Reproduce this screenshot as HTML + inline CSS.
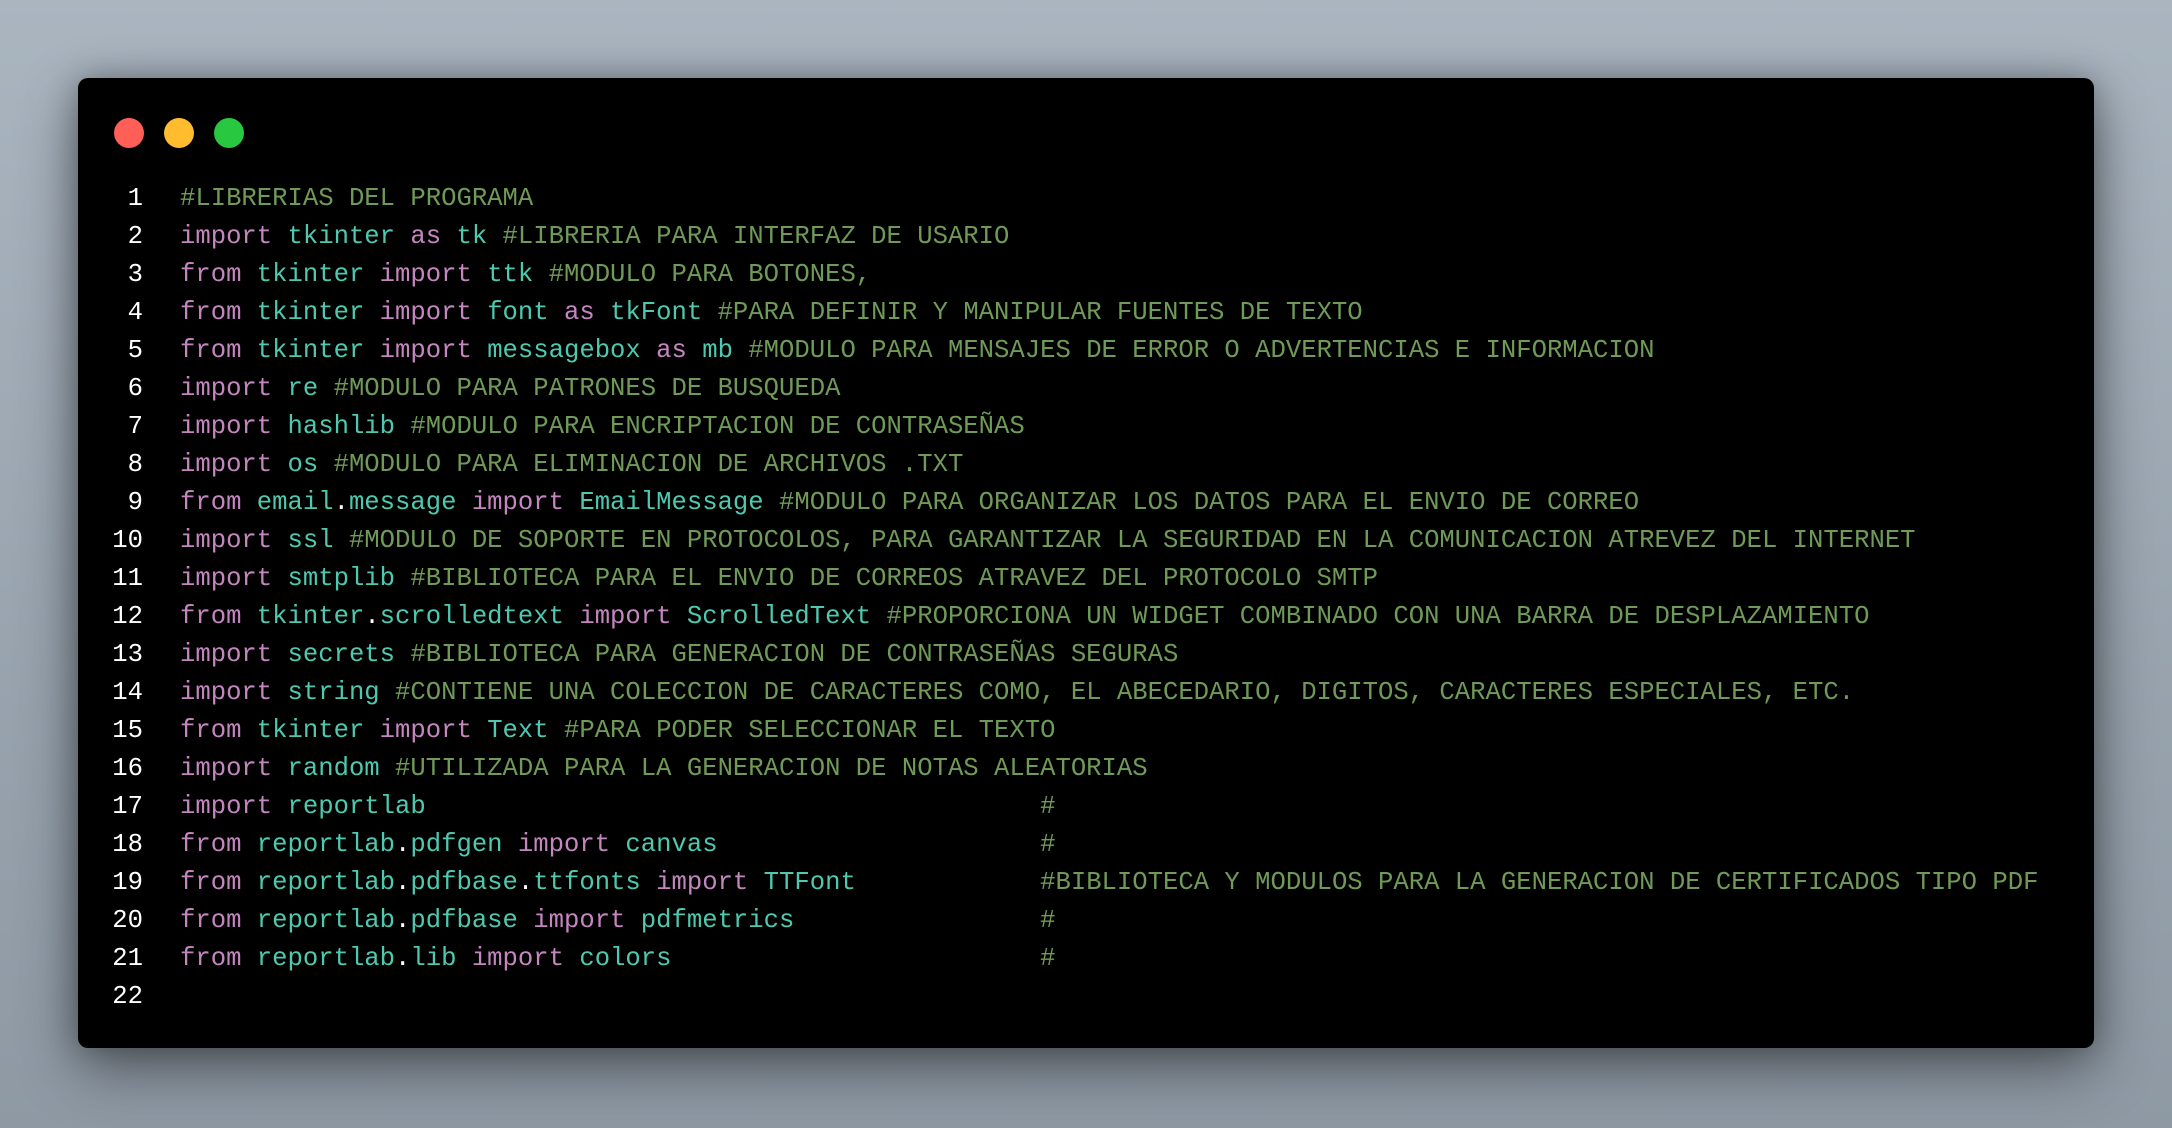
<!DOCTYPE html>
<html><head><meta charset="utf-8"><style>
html,body{margin:0;padding:0}
body{width:2172px;height:1128px;overflow:hidden;background:linear-gradient(180deg,#aab5c0 0%,#98a3ae 60%,#8e99a4 100%);position:relative;font-family:"Liberation Mono",monospace}
.card{position:absolute;left:78px;top:78px;width:2016px;height:970px;background:#000;border-radius:10px;box-shadow:0 20px 60px rgba(0,0,0,.45),0 0 30px rgba(0,0,0,.25)}
.dot{position:absolute;top:118px;width:30px;height:30px;border-radius:50%}
.code{position:absolute;top:180px;left:0;font-size:25.6px;line-height:38px;white-space:pre}
.ln{position:absolute;left:100px;width:43px;text-align:right;color:#fff}
.tx{position:absolute;left:180px}
.k{color:#c586c0}.i{color:#4ec9b0}.c{color:#6f9a58}.w{color:#fff}
</style></head><body>
<div class="card"></div>
<div class="dot" style="left:114px;background:#ff5f57"></div>
<div class="dot" style="left:164px;background:#febc2e"></div>
<div class="dot" style="left:214px;background:#28c840"></div>
<div class="code ln">1
2
3
4
5
6
7
8
9
10
11
12
13
14
15
16
17
18
19
20
21
22</div>
<div class="code tx"><span class="c">#LIBRERIAS DEL PROGRAMA</span>
<span class="k">import</span> <span class="i">tkinter</span> <span class="k">as</span> <span class="i">tk</span> <span class="c">#LIBRERIA PARA INTERFAZ DE USARIO</span>
<span class="k">from</span> <span class="i">tkinter</span> <span class="k">import</span> <span class="i">ttk</span> <span class="c">#MODULO PARA BOTONES,</span>
<span class="k">from</span> <span class="i">tkinter</span> <span class="k">import</span> <span class="i">font</span> <span class="k">as</span> <span class="i">tkFont</span> <span class="c">#PARA DEFINIR Y MANIPULAR FUENTES DE TEXTO</span>
<span class="k">from</span> <span class="i">tkinter</span> <span class="k">import</span> <span class="i">messagebox</span> <span class="k">as</span> <span class="i">mb</span> <span class="c">#MODULO PARA MENSAJES DE ERROR O ADVERTENCIAS E INFORMACION</span>
<span class="k">import</span> <span class="i">re</span> <span class="c">#MODULO PARA PATRONES DE BUSQUEDA</span>
<span class="k">import</span> <span class="i">hashlib</span> <span class="c">#MODULO PARA ENCRIPTACION DE CONTRASEÑAS</span>
<span class="k">import</span> <span class="i">os</span> <span class="c">#MODULO PARA ELIMINACION DE ARCHIVOS .TXT</span>
<span class="k">from</span> <span class="i">email</span><span class="w">.</span><span class="i">message</span> <span class="k">import</span> <span class="i">EmailMessage</span> <span class="c">#MODULO PARA ORGANIZAR LOS DATOS PARA EL ENVIO DE CORREO</span>
<span class="k">import</span> <span class="i">ssl</span> <span class="c">#MODULO DE SOPORTE EN PROTOCOLOS, PARA GARANTIZAR LA SEGURIDAD EN LA COMUNICACION ATREVEZ DEL INTERNET</span>
<span class="k">import</span> <span class="i">smtplib</span> <span class="c">#BIBLIOTECA PARA EL ENVIO DE CORREOS ATRAVEZ DEL PROTOCOLO SMTP</span>
<span class="k">from</span> <span class="i">tkinter</span><span class="w">.</span><span class="i">scrolledtext</span> <span class="k">import</span> <span class="i">ScrolledText</span> <span class="c">#PROPORCIONA UN WIDGET COMBINADO CON UNA BARRA DE DESPLAZAMIENTO</span>
<span class="k">import</span> <span class="i">secrets</span> <span class="c">#BIBLIOTECA PARA GENERACION DE CONTRASEÑAS SEGURAS</span>
<span class="k">import</span> <span class="i">string</span> <span class="c">#CONTIENE UNA COLECCION DE CARACTERES COMO, EL ABECEDARIO, DIGITOS, CARACTERES ESPECIALES, ETC.</span>
<span class="k">from</span> <span class="i">tkinter</span> <span class="k">import</span> <span class="i">Text</span> <span class="c">#PARA PODER SELECCIONAR EL TEXTO</span>
<span class="k">import</span> <span class="i">random</span> <span class="c">#UTILIZADA PARA LA GENERACION DE NOTAS ALEATORIAS</span>
<span class="k">import</span> <span class="i">reportlab</span>                                        <span class="c">#</span>
<span class="k">from</span> <span class="i">reportlab</span><span class="w">.</span><span class="i">pdfgen</span> <span class="k">import</span> <span class="i">canvas</span>                     <span class="c">#</span>
<span class="k">from</span> <span class="i">reportlab</span><span class="w">.</span><span class="i">pdfbase</span><span class="w">.</span><span class="i">ttfonts</span> <span class="k">import</span> <span class="i">TTFont</span>            <span class="c">#BIBLIOTECA Y MODULOS PARA LA GENERACION DE CERTIFICADOS TIPO PDF</span>
<span class="k">from</span> <span class="i">reportlab</span><span class="w">.</span><span class="i">pdfbase</span> <span class="k">import</span> <span class="i">pdfmetrics</span>                <span class="c">#</span>
<span class="k">from</span> <span class="i">reportlab</span><span class="w">.</span><span class="i">lib</span> <span class="k">import</span> <span class="i">colors</span>                        <span class="c">#</span>
</div>
</body></html>
